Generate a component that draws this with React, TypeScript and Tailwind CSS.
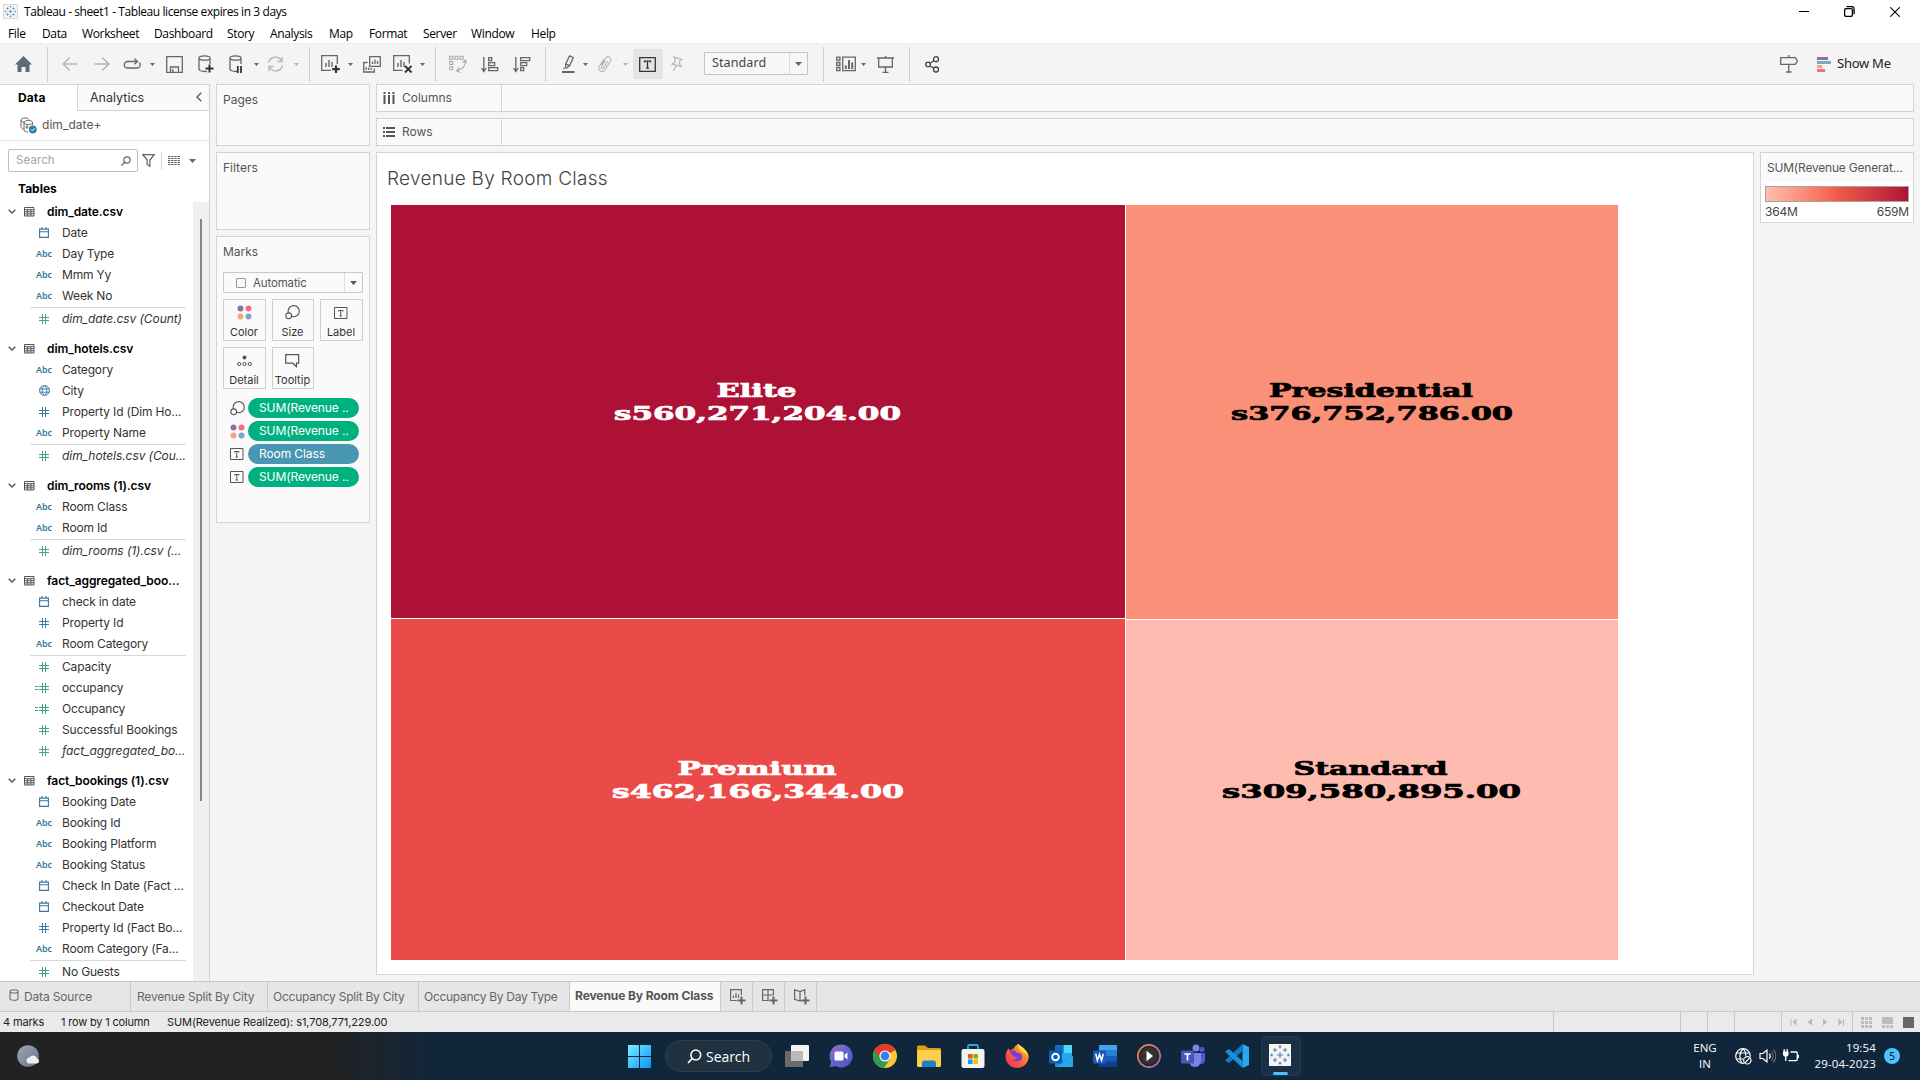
import React from "react";

type P = { className?: string; w?: number; h?: number; box?: string; children?: React.ReactNode };

function Svg({ className = "", w = 18, h = 18, box, children }: P) {
  return (
    <svg className={`block shrink-0 ${className}`} width={w} height={h} viewBox={box ?? `0 0 ${w} ${h}`} fill="none" stroke="currentColor" strokeWidth="1.3">
      {children}
    </svg>
  );
}

function Caret({ className = "text-[#666]" }: { className?: string }) {
  return (
    <Svg w={5} h={3} className={className}>
      <path d="M0 0h5L2.5 3z" fill="currentColor" stroke="none" />
    </Svg>
  );
}

const Sep = ({ className = "" }: { className?: string }) => <div className={`h-[35px] w-px shrink-0 bg-[#cfcfcf] ${className}`} />;

function TableauMark({ size, color = "#3f80ab" }: { size: number; color?: string }) {
  const plus = (x: number, y: number, r: number, k: string) => <path key={k} d={`M${x - r} ${y}h${2 * r}M${x} ${y - r}v${2 * r}`} />;
  return (
    <Svg w={size} h={size} box="0 0 24 24" className="text-[#3f80ab]">
      <g stroke={color} strokeWidth="1.2">
        {plus(12, 12, 3.4, "c")}
        {plus(12, 3, 1.7, "n")}
        {plus(12, 21, 1.7, "s")}
        {plus(3, 12, 1.7, "w")}
        {plus(21, 12, 1.7, "e")}
        {plus(6.5, 6.5, 2.2, "nw")}
        {plus(17.5, 6.5, 2.2, "ne")}
        {plus(6.5, 17.5, 2.2, "sw")}
        {plus(17.5, 17.5, 2.2, "se")}
      </g>
    </Svg>
  );
}

/* ---------- title and menu ---------- */

const menus: [string, string][] = [
  ["File", "w-[34px]"],
  ["Data", "w-[40px]"],
  ["Worksheet", "w-[72px]"],
  ["Dashboard", "w-[73px]"],
  ["Story", "w-[43px]"],
  ["Analysis", "w-[59px]"],
  ["Map", "w-[40px]"],
  ["Format", "w-[54px]"],
  ["Server", "w-[48px]"],
  ["Window", "w-[60px]"],
  ["Help", "w-[40px]"],
];

function Header() {
  return (
    <div className="h-[43px] bg-white font-['Open_Sans','Noto_Sans',sans-serif] text-[12px] text-black">
      <div className="flex h-[23px] items-center pl-[3px]">
        <div className="border border-[#d9d9d9] bg-[#f4f4f4]">
          <TableauMark size={13} />
        </div>
        <span className="ml-[6px] text-[12px] tracking-[-0.42px] whitespace-nowrap">Tableau - sheet1 - Tableau license expires in 3 days</span>
        <div className="ml-auto flex items-center pr-[20px]">
          <Svg w={10} h={10} className="mr-[35px]"><path d="M0 4.5h10" strokeWidth="1" /></Svg>
          <Svg w={11} h={11} className="mr-[35px]"><rect x=".6" y="2.6" width="7.8" height="7.8" rx="1.4" /><path d="M2.5 .6h5.3a2.3 2.3 0 0 1 2.3 2.3v5.3" /></Svg>
          <Svg w={10} h={10}><path d="M.3.3l9.4 9.4M9.7.3L.3 9.7" strokeWidth="1.1" /></Svg>
        </div>
      </div>
      <div className="flex h-[20px] items-center pt-[2px] pl-[8px] tracking-[-0.35px]">
        {menus.map(([m, w]) => (
          <span key={m} className={`shrink-0 whitespace-nowrap ${w}`}>{m}</span>
        ))}
      </div>
    </div>
  );
}

/* ---------- toolbar ---------- */

const chartBars = <path d="M5 12V8M8 12V5M11 12V7" strokeWidth="1.4" />;

function Cylinder() {
  return <path d="M9 16.5C4 16.5 1 15.500 1 14V3M12 3v6M1 3c0-1.200 2.500-2.200 5.500-2.200S12 1.800 12 3s-2.500 2.200-5.500 2.200S1 4.200 1 3z" />;
}

function Toolbar() {
  return (
    <div className="flex h-[41px] items-center border-t border-[#ececec] bg-[#f4f4f4] text-[#666]">
      <Svg w={17} h={16} className="ml-[15px] text-[#5f6b79]"><path d="M8.500 0L17 8.500h-2.500V16h-4v-5h-4v5h-4V8.500H0z" fill="currentColor" stroke="none" /></Svg>
      <Sep className="ml-[15px]" />
      <Svg w={16} h={14} className="ml-[14px] text-[#b5b5b5]"><path d="M15.500 7H1.500M7.500 .8L1.300 7l6.200 6.200" strokeWidth="1.6" /></Svg>
      <Svg w={16} h={14} className="ml-[16px] text-[#b5b5b5]"><path d="M.5 7h14M8.500 .8L14.700 7l-6.200 6.200" strokeWidth="1.6" /></Svg>
      <Svg w={19} h={12} className="ml-[13px]"><path d="M15 10H4.500a3.200 3.200 0 0 1-3.200-3.200A3.200 3.200 0 0 1 4.500 3.500H14M14.500 10a3.200 3.200 0 0 0 1.800-5.500M11.500 .8l3 2.700-3 2.700" /></Svg>
      <div className="ml-[8px]"><Caret /></div>
      <Svg w={17} h={17} className="ml-[11px]"><path d="M.7.7h15.600v15.600H.7zM4.500 16v-5h8v5M6.800 13v3" /></Svg>
      <Svg w={16} h={18} className="ml-[15px]"><Cylinder /><path d="M11.500 9.500v8M7.500 13.500h8" stroke="#333" strokeWidth="2" /></Svg>
      <Svg w={16} h={18} className="ml-[15px]"><Cylinder /><path d="M8.800 11v7M12 11v7" stroke="#333" strokeWidth="1.800" /></Svg>
      <div className="ml-[9px]"><Caret /></div>
      <Svg w={17} h={16} className="ml-[8px] text-[#b5b5b5]"><path d="M1.500 6.500a7 7 0 0 1 13-1.500M15.500 9.500a7 7 0 0 1-13 1.500M15 1v4.500h-4.500M2 15v-4.500h4.500" /></Svg>
      <div className="ml-[10px]"><Caret className="text-[#b5b5b5]" /></div>
      <Sep className="ml-[10px]" />
      <Svg w={19} h={18} className="ml-[11px]"><path d="M10 15.300H.7V.7h15.600V9" />{chartBars}<path d="M15 10.500v7.500M11.200 14.200h7.600" stroke="#333" strokeWidth="2.200" /></Svg>
      <div className="ml-[8px]"><Caret /></div>
      <Svg w={18} h={17} className="ml-[10px]"><path d="M6.700.7h10.600v9.600H6.700zM9.500 8V5.500M12 8V3.500M14.500 8V5M4.500 6.500H.7v9.500h10.600v-3.500M3.200 14v-3M5.700 14v-2.500M8.200 14v-2" /></Svg>
      <Svg w={20} h={18} className="ml-[12px]"><path d="M9.500 15.300H.7V.7h15.600V8.500" />{chartBars}<path d="M12 11l6.500 6.500M18.500 11L12 17.500" stroke="#333" strokeWidth="1.900" /></Svg>
      <div className="ml-[7px]"><Caret /></div>
      <Sep className="ml-[10px]" />
      <Svg w={18} h={18} className="ml-[13px] text-[#a8a8a8]"><path d="M.7 1.200h3v3h-3zM5.900 1.200h3v3h-3zM11.100 1.200h3v3h-3zM.7 6.500h3v3h-3zM.7 11.700h3v3h-3zM16 6c.6 5-2 8-7.500 9.500M13.500 8L16 5l2 3M10.500 12.500L7.500 15.700l3.800 1.700" strokeWidth="1.100" /></Svg>
      <Svg w={18} h={17} className="ml-[14px]"><path d="M2.800 1v13M.5 12l2.300 3.500L5.100 12M7.700 1.700h3v3h-3zM7.700 6.700h6v3h-6zM7.700 11.700h9v3h-9z" /></Svg>
      <Svg w={18} h={17} className="ml-[14px]"><path d="M2.800 1v13M.5 12l2.300 3.500L5.100 12M7.700 1.700h9v3h-9zM7.700 6.700h6v3h-6zM7.700 11.700h3v3h-3z" /></Svg>
      <Sep className="ml-[14px]" />
      <Svg w={13} h={18} className="ml-[16px]"><path d="M7.500 .9l3.700 1.600-3.500 8L4.500 13l-1-.5.300-3.700zM3.800 9l3.800 1.600M2.500 13l-1 1" /><path d="M0 17h12.500" strokeWidth="2" /></Svg>
      <div className="ml-[8px]"><Caret /></div>
      <Svg w={14} h={17} className="ml-[10px] text-[#b5b5b5]"><path d="M3.500 9l4.200-6.800a2.700 2.700 0 0 1 4.800 2.600L7 14a3.400 3.400 0 0 1-5.800-3.500L6 3M9.800 5l-4.500 7.500a1.300 1.300 0 0 1-2-1.300L7 5" strokeWidth="1.100" /></Svg>
      <div className="ml-[11px]"><Caret className="text-[#b5b5b5]" /></div>
      <div className="ml-[5px] flex h-[30px] w-[30px] items-center justify-center bg-[#e4e4e4] pr-px text-[#333]">
        <Svg w={17} h={15}><path d="M.7.7h15.600v13.600H.7zM5.500 5.500V4.200h6v1.300M8.500 4.200v7M7 11.200h3" /></Svg>
      </div>
      <Svg w={13} h={16} className="ml-[7px] text-[#b5b5b5]"><path d="M4 1l7.500 2.500-1.500.8-.5 3.700 1.800 2.500L2 8l2.500-1.200L5.300 3zM6.200 9.500L3.500 15" strokeWidth="1.200" /></Svg>
      <div className="mb-px ml-[21px] flex h-[23px] w-[104px] items-center rounded-[1px] border border-[#c4c4c4] bg-[#f7f7f7]">
        <span className="w-[84px] pl-[7px] font-['Noto_Sans',sans-serif] text-[12.500px] tracking-[0.1px] text-[#444]">Standard</span>
        <div className="flex h-full flex-1 items-center justify-center border-l border-[#dcdcdc]">
          <Svg w={7} h={4}><path d="M0 0h7L3.500 4z" fill="currentColor" stroke="none" /></Svg>
        </div>
      </div>
      <Sep className="ml-[15px]" />
      <Svg w={20} h={16} className="ml-[12px]"><path d="M.7 1.200h3.200v3H.7zM.7 6.500h3.200v3H.7zM.7 11.700h3.200v3H.7zM6.700 1.200h12.600v13.500H6.700z" /><path d="M9.800 13V9.500M13 13V4M16.200 13V6.500" strokeWidth="2" /></Svg>
      <div className="ml-[5px]"><Caret /></div>
      <Svg w={17} h={17} className="ml-[11px]"><path d="M0 2h17M1.700 2v9h13.600V2M8.500 0v2M8.500 11v5M5.500 16.300h6" /></Svg>
      <Sep className="ml-[15px]" />
      <Svg w={15} h={17} className="ml-[15px] text-[#444]"><circle cx="3" cy="8.500" r="2.300" /><circle cx="11" cy="3.200" r="2.500" /><circle cx="11" cy="13.500" r="2.500" /><path d="M5 7.300l3.800-2.500M5 9.700l3.800 2.500" /></Svg>
      <Svg w={18} h={18} className="ml-auto"><path d="M.7 2.700h14.500l2.300 3.300-2.300 3.300H.7zM8.700 0v2.700M8.700 9.300v7.500M6 17h5.500" /></Svg>
      <div className="ml-[19px] flex flex-col gap-px">
        <div className="h-[3px] w-[11px] bg-[#8a7499]" />
        <div className="h-[3px] w-[14px] bg-[#80a2c9]" />
        <div className="h-[3px] w-[5px] bg-[#f3a67d]" />
        <div className="h-[3px] w-[8px] bg-[#fb6b80]" />
      </div>
      <span className="mr-[28px] ml-[6px] w-[55px] font-['Noto_Sans',sans-serif] text-[13px] tracking-[-0.25px] whitespace-nowrap text-[#222]">Show Me</span>
    </div>
  );
}

/* ---------- data pane ---------- */

type Kind = "date" | "abc" | "geo" | "num" | "meas" | "calc";
type Row = { k: Kind; t: string; i?: boolean } | "sep";
const r = (k: Kind, t: string, i = false): Row => ({ k, t, i });

const tables: { name: string; rows: Row[] }[] = [
  { name: "dim_date.csv", rows: [r("date", "Date"), r("abc", "Day Type"), r("abc", "Mmm Yy"), r("abc", "Week No"), "sep", r("meas", "dim_date.csv (Count)", true)] },
  { name: "dim_hotels.csv", rows: [r("abc", "Category"), r("geo", "City"), r("num", "Property Id (Dim Ho..."), r("abc", "Property Name"), "sep", r("meas", "dim_hotels.csv (Cou...", true)] },
  { name: "dim_rooms (1).csv", rows: [r("abc", "Room Class"), r("abc", "Room Id"), "sep", r("meas", "dim_rooms (1).csv (...", true)] },
  { name: "fact_aggregated_boo...", rows: [r("date", "check in date"), r("num", "Property Id"), r("abc", "Room Category"), "sep", r("meas", "Capacity"), r("calc", "occupancy"), r("calc", "Occupancy"), r("meas", "Successful Bookings"), r("meas", "fact_aggregated_bo...", true)] },
  { name: "fact_bookings (1).csv", rows: [r("date", "Booking Date"), r("abc", "Booking Id"), r("abc", "Booking Platform"), r("abc", "Booking Status"), r("date", "Check In Date (Fact ..."), r("date", "Checkout Date"), r("num", "Property Id (Fact Bo..."), r("abc", "Room Category (Fa..."), "sep", r("meas", "No Guests")] },
];

function FieldIcon({ k }: { k: Kind }) {
  const blue = "text-[#36789e]";
  if (k === "abc") return <span className={`font-['Noto_Sans',sans-serif] text-[9px] leading-none font-semibold ${blue}`}>Abc</span>;
  if (k === "date") return <Svg w={10} h={11} className={blue}><path d="M.6 2.100h8.800v8.300H.6zM.6 4.800h8.800M3 0v2.500M7 0v2.500" strokeWidth="1.100" /></Svg>;
  if (k === "geo") return <Svg w={11} h={11} className={blue}><circle cx="5.500" cy="5.500" r="4.900" strokeWidth="1" /><path d="M.6 4h9.800M.6 7.200h9.800M5.500 .5C2.500 3 2.500 8 5.500 10.500M5.500 .5c3 2.500 3 7.500 0 10" strokeWidth=".9" /></Svg>;
  return (
    <div className={`relative ${k === "num" ? blue : "text-[#41a379]"}`}>
      <Svg w={10} h={10}><path d="M0 3.500h10M0 6.500h10M3.500 0v10M6.500 0v10" strokeWidth="1" /></Svg>
      {k === "calc" && (
        <Svg w={3} h={4} className="absolute top-[3px] -left-[4px]"><path d="M0 .5h3M0 3.500h3" strokeWidth="1" /></Svg>
      )}
    </div>
  );
}

function DataPane() {
  return (
    <div className="flex h-[897px] w-[210px] shrink-0 flex-col border-r border-[#d0d0d0] bg-white font-['Inter',sans-serif]">
      <div className="flex h-[27px] shrink-0 text-[12px]">
        <div className="w-[77px] border-t border-[#d4d4d4] pt-[4px] pl-[18px] font-bold tracking-[0.1px] text-black">Data</div>
        <div className="flex flex-1 justify-between border-t border-b border-l border-[#d4d4d4] bg-[#fafafa] pt-[4px] pr-[7px] pl-[12px] text-[12.500px] text-[#333]">
          Analytics
          <Svg w={6} h={10} className="mt-[3px] text-[#555]"><path d="M5.300 .7L1 5l4.300 4.300" /></Svg>
        </div>
      </div>
      <div className="flex h-[30px] shrink-0 items-center border-b border-[#e0e0e0] pb-px pl-[20px]">
        <Svg w={17} h={17} className="text-[#666]">
          <path d="M9 3.500C9 2 7.500 1 5 1S1 2 1 3.200V10c0 1 1 1.800 2.500 2M1 3.200C1 4.500 2.500 5 4 5.200M4 5.500C4 4.500 6 3.500 8.500 3.500S12.500 4.500 12.500 5.500 11 7.500 8.500 7.500 4 6.700 4 5.500zM4 5.500V13c0 1.200 1.500 2 4 2M12.500 5.500V8M7 8v4M5.500 10h3" strokeWidth="1" />
          <circle cx="12.800" cy="12.500" r="3.900" fill="#2f7fab" stroke="none" />
          <path d="M11 12.500l1.300 1.300 2.400-2.500" stroke="#fff" strokeWidth="1" />
        </Svg>
        <span className="ml-[5px] pb-px text-[12px] tracking-[0.05px] text-[#555]">dim_date+</span>
      </div>
      <div className="flex h-[39px] shrink-0 items-center pl-[8px] text-[#666]">
        <div className="flex h-[23px] w-[130px] items-center justify-between rounded-[2px] border border-[#bdbdbd] pr-[6px] pl-[7px]">
          <span className="pt-px text-[11.500px] tracking-[0.1px] text-[#a5a5a5]">Search</span>
          <Svg w={10} h={10}><circle cx="6" cy="4" r="3.200" strokeWidth="1.200" /><path d="M3.700 6.300L.5 9.500" /></Svg>
        </div>
        <Svg w={13} h={13} className="ml-[4px]"><path d="M.8.7h11.400L7.900 6v6.200L5.200 10.500V6z" /></Svg>
        <div className="ml-[6px] h-[18px] w-px bg-[#d4d4d4]" />
        <Svg w={12} h={9} className="ml-[6px] text-[#555]"><path d="M0 .5h12M0 2.500h12M0 4.500h12M0 6.500h12M0 8.500h12" strokeWidth="1" strokeDasharray="2.300 .9" /></Svg>
        <Svg w={7} h={4} className="ml-[9px]"><path d="M0 0h7L3.500 4z" fill="currentColor" stroke="none" /></Svg>
      </div>
      <div className="h-[21px] shrink-0 pl-[18px] text-[12px] leading-[18px] font-bold tracking-[0px] text-black">Tables</div>
      <div className="flex min-h-0 flex-1 overflow-hidden">
        <div className="w-[193px] shrink-0">
          {tables.map((t) => (
            <div key={t.name} className="mb-[9px]">
              <div className="flex h-[21px] items-center pl-[8px] text-[#555]">
                <Svg w={8} h={5}><path d="M.7.700L4 4 7.300.7" strokeWidth="1.400" /></Svg>
                <Svg w={11} h={10} className="ml-[8px]"><path d="M.5.500h9.500v8.500H.5zM.5 2.700h9.500M.5 4.800h9.500M.5 6.900h9.500M3.600 2.700V9M6.900 2.700V9" strokeWidth="1" /></Svg>
                <span className="ml-[12px] text-[12px] font-semibold tracking-[-0.1px] whitespace-nowrap text-black">{t.name}</span>
              </div>
              {t.rows.map((row, n) =>
                row === "sep" ? (
                  <div key={n} className="mr-[7px] ml-[30px] h-[2px] border-b border-[#d9d9d9]" />
                ) : (
                  <div key={n} className="flex h-[21px] items-center">
                    <div className="ml-[34px] flex w-[20px] justify-center"><FieldIcon k={row.k} /></div>
                    <span className={`ml-[8px] text-[12px] whitespace-nowrap text-[#333] ${row.i ? "tracking-[-0.07px] italic" : "tracking-[-0.16px]"}`}>{row.t}</span>
                  </div>
                )
              )}
            </div>
          ))}
        </div>
        <div className="mt-px flex-1 bg-[#f0f0f0] pt-[17px] pl-[7px]">
          <div className="h-[582px] w-[2px] bg-[#858585]" />
        </div>
      </div>
    </div>
  );
}

/* ---------- cards ---------- */

const card = "border border-[#d4d4d4] bg-[#fafafa]";

function LabelIcon() {
  return <Svg w={14} h={12}><path d="M.5.500h12.500v11H.5zM4.500 4.500v-1h4.500v1M6.750 3.500v5.500M5.500 9h2.500" strokeWidth="1" /></Svg>;
}
function SizeIcon() {
  return <Svg w={15} h={15}><circle cx="8.700" cy="6.200" r="5.600" strokeWidth="1.100" /><circle cx="3.700" cy="10.800" r="2.900" fill="#fafafa" strokeWidth="1.100" /></Svg>;
}
function ColorIcon() {
  return (
    <Svg w={15} h={15}>
      <g stroke="none">
        <circle cx="3.500" cy="3.500" r="3" fill="#8a7499" /><circle cx="11.500" cy="3.500" r="3" fill="#fb6b80" />
        <circle cx="3.500" cy="11.500" r="3" fill="#f3a67d" /><circle cx="11.500" cy="11.500" r="3" fill="#80a2c9" />
      </g>
    </Svg>
  );
}

const buttons: [string, React.ReactNode][] = [
  ["Color", <ColorIcon />],
  ["Size", <SizeIcon />],
  ["Label", <LabelIcon />],
  ["Detail", <Svg w={15} h={12}><circle cx="7.500" cy="2.500" r="2" fill="currentColor" stroke="none" /><circle cx="2.200" cy="9" r="1.600" strokeWidth="1" /><circle cx="7.500" cy="9" r="1.600" strokeWidth="1" /><circle cx="12.800" cy="9" r="1.600" strokeWidth="1" /></Svg>],
  ["Tooltip", <Svg w={15} h={14}><path d="M.7.700h13v8.500h-2.200v3.500L7.800 9.200H.7z" strokeWidth="1.200" /></Svg>],
];

const pills: [React.ReactNode, string, string][] = [
  [<SizeIcon />, "SUM(Revenue ..", "bg-[#00b180]"],
  [<ColorIcon />, "SUM(Revenue ..", "bg-[#00b180]"],
  [<LabelIcon />, "Room Class", "bg-[#4996b2]"],
  [<LabelIcon />, "SUM(Revenue ..", "bg-[#00b180]"],
];

function Cards() {
  return (
    <div className="ml-[6px] flex w-[154px] shrink-0 flex-col gap-[6px] font-['Inter',sans-serif] text-[12px] text-[#555]">
      <div className={`h-[62px] pt-[6px] pl-[6px] ${card}`}>Pages</div>
      <div className={`h-[78px] pt-[6px] pl-[6px] ${card}`}>Filters</div>
      <div className={`h-[287px] px-[6px] pt-[6px] ${card}`}>
        <div className="h-[29px]">Marks</div>
        <div className="flex h-[21px] w-[140px] items-center rounded-[1px] border border-[#c9c9c9]">
          <div className="ml-[12px] h-[10px] w-[10px] rounded-[1px] border border-[#999]" />
          <span className="ml-[7px] flex-1 pt-[2px] text-[11.500px] tracking-[-0.15px]">Automatic</span>
          <div className="flex h-full w-[18px] items-center justify-center border-l border-[#dedede]">
            <Svg w={7} h={4}><path d="M0 0h7L3.500 4z" fill="currentColor" stroke="none" /></Svg>
          </div>
        </div>
        <div className="mt-[6px] grid w-[140px] grid-cols-[43px_42px_43px] gap-x-[6px] gap-y-[6px]">
          {buttons.map(([n, icon]) => (
            <div key={n} className="flex h-[42px] flex-col items-center justify-between border border-[#cfcfcf] pt-[5px] pr-px pb-px">
              <div className="flex h-[15px] items-center">{icon}</div>
              <span className="text-[11px] leading-[14px] tracking-[0px] text-[#333]">{n}</span>
            </div>
          ))}
        </div>
        <div className="mt-[9px] flex flex-col gap-[3px] pl-[7px]">
          {pills.map(([icon, t, bg], n) => (
            <div key={n} className="flex h-[20px] items-center">
              <div className="flex w-[18px]">{icon}</div>
              <div className={`flex h-[20px] w-[111px] items-center rounded-full pl-[11px] text-[12px] tracking-[-0.1px] whitespace-nowrap text-white ${bg}`}>{t}</div>
            </div>
          ))}
        </div>
      </div>
    </div>
  );
}

/* ---------- worksheet ---------- */

const cells = [
  { x: 0, y: 0, w: 734, h: 413, fill: "#ad1136", ink: "#fff", name: "Elite", nw: 80, value: "s560,271,204.00", vw: 287, cx: 366.5, ty: 192 },
  { x: 735, y: 0, w: 492, h: 414, fill: "#fb9078", ink: "#000", name: "Presidential", nw: 204, value: "s376,752,786.00", vw: 282, cx: 981, ty: 192 },
  { x: 0, y: 414, w: 734, h: 341, fill: "#ea4b48", ink: "#fff", name: "Premium", nw: 159, value: "s462,166,344.00", vw: 292, cx: 367, ty: 570 },
  { x: 735, y: 415, w: 492, h: 340, fill: "#febbb0", ink: "#000", name: "Standard", nw: 154, value: "s309,580,895.00", vw: 299, cx: 980.5, ty: 570 },
];

function Treemap() {
  return (
    <svg width="1227" height="755" viewBox="0 0 1227 755" className="block font-['DejaVu_Serif',serif] text-[18px] font-bold">
      {cells.map((c) => (
        <g key={c.name}>
          <rect x={c.x} y={c.y} width={c.w} height={c.h} fill={c.fill} />
          <g fill={c.ink} stroke={c.ink} strokeWidth="0.7">
            <text x={c.cx - 1 - c.nw / 2} y={c.ty} textLength={c.nw} lengthAdjust="spacingAndGlyphs">{c.name}</text>
            <text x={c.cx - c.vw / 2} y={c.ty + 23} textLength={c.vw} lengthAdjust="spacingAndGlyphs">{c.value}</text>
          </g>
        </g>
      ))}
    </svg>
  );
}

function Shelf({ name, icon }: { name: string; icon: React.ReactNode }) {
  return (
    <div className={`flex h-[28px] ${card}`}>
      <div className="flex w-[125px] items-center border-r border-[#d4d4d4] pl-[6px] text-[12px] text-[#555]">
        {icon}
        <span className="ml-[7px]">{name}</span>
      </div>
    </div>
  );
}

function Worksheet() {
  return (
    <div className="ml-[6px] flex w-[1538px] flex-col gap-[6px] font-['Inter',sans-serif]">
      <Shelf name="Columns" icon={<Svg w={12} h={12}><path d="M1.500 0v2M1.500 3v9M6 0v2M6 3v9M10.500 0v2M10.500 3v9" strokeWidth="2" /></Svg>} />
      <Shelf name="Rows" icon={<Svg w={12} h={10}><path d="M0 1h2M3 1h9M0 5h2M3 5h9M0 9h2M3 9h9" strokeWidth="2" /></Svg>} />
      <div className="flex gap-[6px]">
        <div className="h-[823px] w-[1378px] border border-[#d4d4d4] bg-white">
          <h1 className="h-[52px] pt-[11px] pl-[10px] text-[19px] leading-[30px] font-light tracking-[0.27px] whitespace-nowrap text-[#444]">Revenue By Room Class</h1>
          <div className="pl-[14px]"><Treemap /></div>
        </div>
        <div className="h-[71px] w-[154px] border border-[#d4d4d4] bg-white">
          <div className="h-[29px] bg-[#fafafa] pt-[6px] pl-[6px] text-[12px] tracking-[-0.2px] whitespace-nowrap text-[#555]">SUM(Revenue Generat...</div>
          <div className="mx-[4px] mt-[4px] h-[16px] border border-[#a5a59c] bg-linear-to-r from-[#ffbeb2] via-[#f15a48] to-[#ae123a]" />
          <div className="flex justify-between px-[4px] pt-px text-[12px] tracking-[-0.2px] text-[#444]"><span>364M</span><span>659M</span></div>
        </div>
      </div>
    </div>
  );
}

/* ---------- bottom tabs and status ---------- */

const sheetTabs: [string, string][] = [
  ["Revenue Split By City", "w-[137px] pl-[6px] tracking-[-0.18px]"],
  ["Occupancy Split By City", "w-[151px] pl-[5px] tracking-[-0.23px]"],
  ["Occupancy By Day Type", "w-[151px] pl-[5px] tracking-[-0.28px]"],
];

function SheetTabs() {
  const add = "flex w-[32px] items-center justify-center border-r border-[#c8c8c8]";
  return (
    <div className="flex h-[31px] border-t border-b border-[#c8c8c8] bg-[#e6e6e6] font-['Inter',sans-serif] text-[12px] text-[#666]">
      <div className="flex w-[131px] items-center border-r border-[#c8c8c8] pl-[9px] tracking-[-0.15px]">
        <Svg w={10} h={12} className="mr-[5px] mb-[3px]"><path d="M1 2.500C1 1.300 2.500.7 5 .7s4 .6 4 1.800V9.500c0 1.200-1.500 1.800-4 1.800s-4-.6-4-1.800zM1 2.500C1 3.700 2.500 4 5 4s4-.3 4-1.500" strokeWidth="1.100" /></Svg>
        Data Source
      </div>
      {sheetTabs.map(([t, w]) => (
        <div key={t} className={`flex items-center border-r border-[#c8c8c8] whitespace-nowrap ${w}`}>{t}</div>
      ))}
      <div className="flex w-[151px] items-center border-r border-[#c8c8c8] bg-[#fafafa] pb-[2px] pl-[5px] text-[12px] font-bold tracking-[-0.1px] whitespace-nowrap text-[#555]">Revenue By Room Class</div>
      <div className={add}><Svg w={16} h={16} className="ml-[2px]"><path d="M7 11.500H.6V.6h10.800V6M3.500 9V6.500M6 9V4M8.500 9V5.500" strokeWidth="1.200" /><path d="M11.500 7.500v8M7.500 11.500h8" strokeWidth="2" /></Svg></div>
      <div className={add}><Svg w={16} h={16} className="ml-[2px]"><path d="M7 11.500H.6V.6h10.800V6M.6 6h10.800M6 .6v10.900" strokeWidth="1.200" /><path d="M11.500 7.500v8M7.500 11.500h8" strokeWidth="2" /></Svg></div>
      <div className={add}><Svg w={16} h={16} className="ml-[2px]"><path d="M6 2.600L.6.800v9.400L6 12zM6 2.600L10.800.800V6.500M6 12l1.500-.6" strokeWidth="1.200" /><path d="M11.500 7.500v8M7.500 11.500h8" strokeWidth="2" /></Svg></div>
    </div>
  );
}

function StatusBar() {
  return (
    <div className="flex h-[20px] items-center bg-[#eaeaea] pl-[3px] font-['Inter',sans-serif] text-[11px] whitespace-nowrap text-[#222]">
      <span className="w-[58px] tracking-[-0.15px]">4 marks</span>
      <span className="w-[106px] tracking-[-0.18px]">1 row by 1 column</span>
      <span className="w-[230px] tracking-[-0.1px]">SUM(Revenue Realized): s1,708,771,229.00</span>
      <div className="ml-auto flex h-full">
        <div className="w-[127px] border-l border-[#c8c8c8]" />
        <div className="w-[27px] border-l border-[#c8c8c8]" />
        <div className="w-[27px] border-l border-[#c8c8c8]" />
        <div className="w-[47px] border-l border-[#c8c8c8]" />
        <div className="flex w-[71px] items-center border-l border-[#c8c8c8] pl-[7px] text-[#b8b8b8]">
          <Svg w={60} h={8}><g fill="currentColor" stroke="none"><path d="M1.500 1h1v7h-1zM7.500.500v7L3.500 4zM23 .5v7L18.500 4zM34 .5v7L38 4zM49.500.500v7L53.500 4zM54 1h1v7h-1z" /></g></Svg>
        </div>
        <div className="flex w-[68px] items-center gap-[10px] border-l border-[#c8c8c8] pl-[8px]">
          <div className="grid grid-cols-3 gap-px">
            {Array.from({ length: 9 }, (_, n) => <div key={n} className="size-[3px] bg-[#bdbdbd]" />)}
          </div>
          <div className="grid grid-cols-3 gap-px">
            <div className="col-span-3 h-[7px] bg-[#bdbdbd]" />
            {[0, 1, 2].map((n) => <div key={n} className="size-[3px] bg-[#bdbdbd]" />)}
          </div>
          <div className="size-[11px] bg-[#666]" />
        </div>
      </div>
    </div>
  );
}

/* ---------- taskbar ---------- */

const apps: React.ReactNode[] = [
  <><rect x="6" y="1" width="18" height="16" rx="1" fill="#f3f3f3" /><rect x="0" y="7" width="18" height="16" rx="1" fill="#6a6a6a" /><path d="M6 7h12v10H6z" fill="#b9b9b9" /></>,
  <><path d="M12 .5A11.500 11.500 0 1 1 6.500 22L.8 23.300 2 17.500A11.500 11.500 0 0 1 12 .5z" fill="url(#chat)" /><rect x="5.500" y="7.500" width="9" height="9" rx="1.500" fill="#fff" /><path d="M15.500 11l3-2.500v7l-3-2.500z" fill="#fff" /></>,
  <><circle cx="12" cy="12" r="12" fill="#fcc934" /><path d="M12 12L1.600 6A12 12 0 0 1 22.400 6z" fill="#e33b2e" /><path d="M12 12L1.600 6A12 12 0 0 0 11 24l6-9z" fill="#2f9e4c" /><path d="M12 6h10.400A12 12 0 0 0 1.600 6l5 8z" fill="#e33b2e" /><circle cx="12" cy="12" r="5.600" fill="#fff" /><circle cx="12" cy="12" r="4.400" fill="#3a7de9" /></>,
  <><path d="M0 3a1.500 1.500 0 0 1 1.500-1.500H8L11 4h11.500A1.500 1.500 0 0 1 24 5.500V10H0z" fill="#e09c13" /><rect y="6" width="24" height="17" rx="1.500" fill="#fdce4b" /><path d="M5 23v-4a2.500 2.500 0 0 1 2.500-2.500h9A2.500 2.500 0 0 1 19 19v4z" fill="#1d7fc9" /></>,
  <><path d="M7 6V2.500A1.500 1.500 0 0 1 8.500 1h7A1.500 1.500 0 0 1 17 2.500V6" fill="none" stroke="#28a8ea" strokeWidth="1.800" /><rect x="0.500" y="5" width="23" height="19" rx="2" fill="#f3f3f3" /><path d="M7 10h4.600v4.600H7z" fill="#f25022" /><path d="M12.400 10H17v4.600h-4.600z" fill="#7fba00" /><path d="M7 15.400h4.600V20H7z" fill="#00a4ef" /><path d="M12.400 15.400H17V20h-4.600z" fill="#ffb900" /></>,
  <><path d="M13 0c4 3 6 4 7 5.500 3 3 4 6 3.500 9C22.500 20 18 24 12 24S.8 19.500.5 13c0-4 1.500-7 3.500-9 0 1.500.5 2.500 1 3 1-1.500 2.500-2.500 4-2.500C9 3 11 1 13 0z" fill="url(#fox)" /><path d="M5 7c3-1.500 5.500-.5 6.500 1.500 5 .5 6 3 5.500 6-1 3.500-7.500 4.500-9.500.5C9 16 11 15 12 13.500 9 13 7 12 5 7z" fill="#7b3fd0" /><path d="M13 0c4 3 10 7 10.500 13-1-2-2.500-3.500-3.500-4-1 0-4-1.500-5.500-4C13.500 3.500 13 2 13 0z" fill="#ffdf3a" /></>,
  <><rect x="6" y="1" width="17" height="16" rx="1" fill="#28a8ea" /><path d="M14.500 1H22a1 1 0 0 1 1 1v7h-8.500z" fill="#50d9ff" /><path d="M6 1h8.500v8H6z" fill="#0f6cbd" /><path d="M6 12l9 5 9-5v11H6z" fill="#1490df" /><path d="M24 12v11H7z" fill="#28a8ea" /><rect y="6.500" width="13" height="13" rx="1" fill="#0a5fb4" /><circle cx="6.500" cy="13" r="3.300" fill="none" stroke="#fff" strokeWidth="1.900" /></>,
  <><rect x="6" y="1" width="18" height="22" rx="1" fill="#185abd" /><path d="M6 1h18v5.500H6z" fill="#41a5ee" /><path d="M6 6.500h18V12H6z" fill="#2b7cd3" /><path d="M6 17.500h18V22a1 1 0 0 1-1 1H6z" fill="#103f91" /><rect y="6.500" width="13" height="13" rx="1" fill="#185abd" /><path d="M2.700 9.700l1.700 6.600 2.100-6 2.100 6 1.700-6.600" fill="none" stroke="#fff" strokeWidth="1.500" /></>,
  <><circle cx="12" cy="12" r="11.200" fill="#262626" stroke="url(#media)" strokeWidth="1.700" /><circle cx="12" cy="12" r="8.500" fill="#333" /><path d="M9.500 6.700v10.600l6.500-5.300z" fill="#fff" /></>,
  <><circle cx="15" cy="4" r="3.500" fill="#7b83eb" /><circle cx="21" cy="5.500" r="2.500" fill="#5059c9" /><path d="M17 9h7v7a4 4 0 0 1-4 4h-3z" fill="#5059c9" /><path d="M8 9h12v8a6 6 0 0 1-12 0z" fill="#7b83eb" /><rect y="6.500" width="13" height="13" rx="1" fill="#4b53bc" /><path d="M3.300 10h6.400M6.500 10v6.500" fill="none" stroke="#fff" strokeWidth="1.700" /></>,
  <><path d="M17.500 0L24 3v18l-6.500 3z" fill="#2ba7f2" /><path d="M17.500 0v7L4 19 0 16.500z" fill="#0f7cc4" /><path d="M17.500 24v-7L4 5 0 7.500z" fill="#1592dd" /></>,
];

function Taskbar() {
  return (
    <div className="flex h-[48px] items-center bg-linear-to-r from-[#222222] from-17% via-[#10263b] via-23% to-[#10263b] text-white">
      <Svg w={24} h={24} className="ml-[17px]">
        <defs>
          <linearGradient id="moon" x1="0" y1="0" x2="1" y2="1"><stop stopColor="#9aa7b8" /><stop offset="1" stopColor="#6b7683" /></linearGradient>
          <linearGradient id="win" x1="0" y1="0" x2="1" y2="1"><stop stopColor="#78f0ff" /><stop offset="1" stopColor="#0c92f5" /></linearGradient>
          <linearGradient id="chat" x1="0" y1="0" x2="1" y2="1"><stop stopColor="#a86ac0" /><stop offset=".5" stopColor="#6264d0" /><stop offset="1" stopColor="#4f52c0" /></linearGradient>
          <linearGradient id="fox" x1="1" y1="0" x2="0" y2="1"><stop stopColor="#ffcf2e" /><stop offset=".5" stopColor="#ff6a30" /><stop offset="1" stopColor="#e5226f" /></linearGradient>
          <linearGradient id="media" x1="0" y1="0" x2="1" y2="1"><stop stopColor="#f08a3c" /><stop offset="1" stopColor="#a566c8" /></linearGradient>
        </defs>
        <circle cx="11" cy="12" r="10.800" fill="url(#moon)" stroke="none" />
        <path d="M12.500 19.500a3 3 0 0 1 0-6 4 4 0 0 1 7.300.8 2.700 2.700 0 0 1 .5 5.200z" fill="#eceff2" stroke="none" />
      </Svg>
      <Svg w={23} h={23} className="ml-[587px]"><path d="M0 0h11v11H0zM12 0h11v11H12zM0 12h11v11H0zM12 12h11v11H12z" fill="url(#win)" stroke="none" /></Svg>
      <div className="ml-[14px] flex h-[32px] w-[107px] items-center rounded-full border border-[#2b3f50] bg-[#20323f] pl-[21px]">
        <Svg w={15} h={15}><circle cx="8.800" cy="6" r="4.900" strokeWidth="1.500" /><path d="M5.300 9.500L1 14" strokeWidth="1.700" /></Svg>
        <span className="ml-[4px] font-['Open_Sans',sans-serif] text-[14px] tracking-[-0.05px]">Search</span>
      </div>
      <div className="ml-[13px] flex gap-[20px]">
        {apps.map((a, n) => (
          <svg key={n} width="24" height="24" viewBox="0 0 24 24" className="block">{a}</svg>
        ))}
      </div>
      <div className="ml-[12px] flex h-[40px] w-[40px] flex-col items-center rounded-[4px] border border-[#263a4c] bg-[#1b3044] pt-[7px] pr-[2px]">
        <div className="bg-[#f4f4f4]"><TableauMark size={22} color="#4f86b0" /></div>
        <div className="mt-[6px] h-[3px] w-[15px] shrink-0 rounded-full bg-[#4cc2ff]" />
      </div>
      <div className="mr-[20px] ml-auto flex items-center font-['Open_Sans',sans-serif] text-[11.500px] leading-[16px]">
        <div className="w-[30px] text-center">ENG<br />IN</div>
        <Svg w={17} h={17} className="ml-[15px]"><circle cx="8" cy="8" r="7.300" strokeWidth="1.200" /><path d="M1.500 5h13M1.500 11h7M8 .7C4 5 4 11 7 15M8 .7c2.500 2.500 3 5 2.800 7" strokeWidth="1.200" /><circle cx="12.300" cy="12.300" r="4.600" fill="#10263b" stroke="none" /><circle cx="12.300" cy="12.300" r="3.700" strokeWidth="1.200" /><path d="M9.800 14.800l5-5" strokeWidth="1.200" /></Svg>
        <Svg w={17} h={16} className="ml-[7px]"><path d="M1 5.500h3L8 2v12l-4-3.500H1z" strokeWidth="1.200" /><path d="M10.300 5.500a4 4 0 0 1 0 5" strokeWidth="1.200" /><path d="M12.300 3.300a7 7 0 0 1 0 9.400M14.300 1.500a9.500 9.500 0 0 1 0 13" stroke="#60707f" strokeWidth="1.100" /></Svg>
        <Svg w={16} h={14} className="ml-[7px]"><path d="M7.500 3H13a1.300 1.300 0 0 1 1.300 1.300v6a1.300 1.300 0 0 1-1.300 1.300H5.500M15.500 6v3" /><path d="M1.200 0v3M4.200 0v3" /><path d="M0 2.500h5.500v2.500a2.700 2.700 0 0 1-5.500 0z" fill="#fff" stroke="none" /><path d="M2.700 7v5" /></Svg>
        <div className="ml-[10px] w-[67px] text-right tracking-[0.150px] whitespace-nowrap">19:54<br />29-04-2023</div>
        <div className="ml-[8px] flex size-[16px] items-center justify-center rounded-full bg-[#4cc2ff] text-[10px] text-black">5</div>
      </div>
    </div>
  );
}

export default function App() {
  return (
    <div className="h-[1080px] w-[1920px] overflow-hidden bg-[#f4f4f4]">
      <Header />
      <Toolbar />
      <div className="flex h-[897px]">
        <DataPane />
        <Cards />
        <Worksheet />
      </div>
      <SheetTabs />
      <StatusBar />
      <Taskbar />
    </div>
  );
}
